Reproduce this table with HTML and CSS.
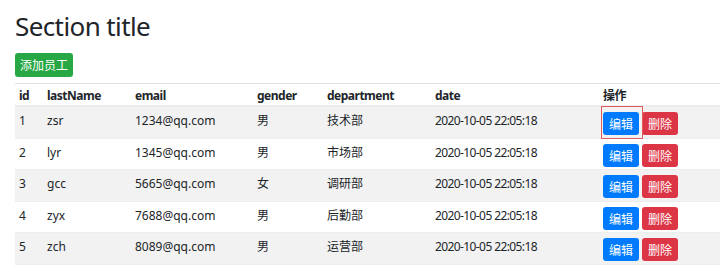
FILE: index.html
```html
<!DOCTYPE html>
<html>
<head>
<meta charset="utf-8">
<link rel="stylesheet" href="styles.css">
</head>
<body>
<div class="page">
  <h2 class="title">Section title</h2>
  <button class="btn btn-green">添加员工</button>
  <table class="tbl">
    <colgroup>
      <col class="c-id"><col class="c-name"><col class="c-email"><col class="c-gender"><col class="c-dept"><col class="c-date"><col class="c-op">
    </colgroup>
    <thead>
      <tr><th>id</th><th>lastName</th><th>email</th><th>gender</th><th>department</th><th>date</th><th>操作</th></tr>
    </thead>
    <tbody>
      <tr><td>1</td><td>zsr</td><td>1234@qq.com</td><td>男</td><td>技术部</td><td class="date">2020-10-05 22:05:18</td><td><div class="ops"><span class="mark"></span><button class="btn btn-blue">编辑</button><button class="btn btn-red">删除</button></div></td></tr>
      <tr><td>2</td><td>lyr</td><td>1345@qq.com</td><td>男</td><td>市场部</td><td class="date">2020-10-05 22:05:18</td><td><div class="ops"><button class="btn btn-blue">编辑</button><button class="btn btn-red">删除</button></div></td></tr>
      <tr><td>3</td><td>gcc</td><td>5665@qq.com</td><td>女</td><td>调研部</td><td class="date">2020-10-05 22:05:18</td><td><div class="ops"><button class="btn btn-blue">编辑</button><button class="btn btn-red">删除</button></div></td></tr>
      <tr><td>4</td><td>zyx</td><td>7688@qq.com</td><td>男</td><td>后勤部</td><td class="date">2020-10-05 22:05:18</td><td><div class="ops"><button class="btn btn-blue">编辑</button><button class="btn btn-red">删除</button></div></td></tr>
      <tr><td>5</td><td>zch</td><td>8089@qq.com</td><td>男</td><td>运营部</td><td class="date">2020-10-05 22:05:18</td><td><div class="ops"><button class="btn btn-blue">编辑</button><button class="btn btn-red">删除</button></div></td></tr>
    </tbody>
  </table>
</div>
</body>
</html>
```
FILE: styles.css
```css
html, body { margin: 0; padding: 0; background: #fff; }
body {
  font-family: "Noto Sans", "Noto Sans CJK SC", sans-serif;
  color: #212529;
  font-size: 12px;
}
.page { padding: 9px 0 0 15px; }
.title {
  margin: 0 0 10px 0;
  font-size: 26px;
  font-weight: 400;
  line-height: 34px;
  letter-spacing: -0.6px;
}
.btn {
  font-family: "Noto Sans CJK SC", "Noto Sans", sans-serif;
  border: none;
  border-radius: 3px;
  color: #fff;
  font-size: 12px;
  line-height: 23px;
  height: 23px;
  padding: 0 6px;
  margin: 0;
  cursor: pointer;
}
.btn-green { background: #28a745; height: 24px; line-height: 24px; padding: 0 5px; display: block; }
.btn-blue { background: #007bff; }
.btn-red { background: #dc3545; }
.tbl {
  margin-top: 6px;
  width: 705px;
  border-collapse: separate;
  border-spacing: 0;
  table-layout: fixed;
}
.c-id { width: 28px; }
.c-name { width: 88px; }
.c-email { width: 122px; }
.c-gender { width: 70px; }
.c-dept { width: 108px; }
.c-date { width: 168px; }
.c-op { width: 121px; }
.tbl th, .tbl td {
  text-align: left;
  white-space: nowrap;
  padding-left: 4px;
  padding-right: 4px;
}
.tbl th {
  font-weight: 700;
  line-height: 14px;
  vertical-align: bottom;
  padding-top: 5px;
  padding-bottom: 2px;
  border-top: 1px solid #dee2e6;
  border-bottom: 2px solid #e9ecef;
  letter-spacing: -0.5px;
}
.tbl td {
  line-height: 17px;
  vertical-align: top;
  padding-top: 5px;
  padding-bottom: 2.6px;
  border-bottom: 1px solid #eceef0;
}
.tbl td.date { letter-spacing: -0.6px; }
.tbl tbody tr:nth-child(odd) td { background: #f2f2f2; }
.ops {
  position: relative;
  display: flex;
  gap: 3px;
}
.mark {
  position: absolute;
  left: -2px;
  top: -6px;
  width: 42px;
  height: 33px;
  box-sizing: border-box;
  border: 1px solid #e05a5a;
}
```
